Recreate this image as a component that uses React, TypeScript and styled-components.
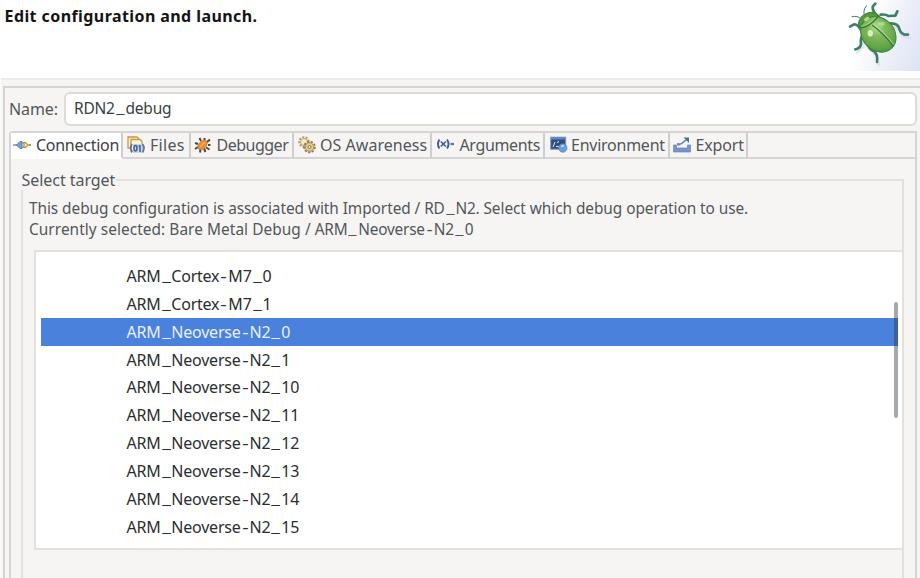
import React from 'react';
import styled, { createGlobalStyle, css } from 'styled-components';

const GlobalStyle = createGlobalStyle`
  * { box-sizing: border-box; }
  html, body { margin: 0; padding: 0; background: #fff; overflow: hidden; }
  body { font: 16px/20px "Noto Sans", "Open Sans", sans-serif; color: #51575a; }
`;

const line = '#d6d5d3';
const softLine = '#e3e1de';
const surface = '#f6f5f3';

const Dialog = styled.div`
  width: 920px;
  height: 578px;
  display: flex;
  flex-direction: column;
  overflow: hidden;
  background: #fff;
`;

const Header = styled.header`
  height: 78px;
  flex: none;
  display: flex;
  justify-content: space-between;
  padding-left: 4.5px;
`;

const Title = styled.h1`
  margin: 6px 0 0;
  font-size: 16px;
  line-height: 20px;
  font-weight: 700;
  letter-spacing: 0.42px;
  color: #141414;
`;

const Banner = styled.div`
  width: 82px;
  height: 71px;
  background: linear-gradient(112deg, #fff 36%, #eef0f9 64%, #dde3f5 100%);
  svg { display: block; }
`;

const Panel = styled.main`
  flex: 1;
  min-height: 0;
  display: flex;
  margin-left: 1px;
  padding: 6px 0 0 2px;
  background: ${surface};
  border-top: 2px solid #ebebea;
`;

const Frame = styled.div`
  flex: 1;
  min-width: 0;
  display: flex;
  flex-direction: column;
  border-top: 2px solid ${line};
  border-left: 2px solid ${line};
`;

const NameRow = styled.label`
  display: flex;
  align-items: center;
  height: 34px;
  flex: none;
  margin: 4px 3px 0 4px;
`;

const NameLabel = styled.span`
  width: 55px;
  height: 21px;
  letter-spacing: -0.1px;
`;

const NameField = styled.span`
  flex: 1;
  height: 34px;
  padding: 4px 8px;
  border: 2px solid #dedbd7;
  border-radius: 6px;
  background: #fff;
  color: #3a3f42;
  font-size: 15.5px;
  white-space: nowrap;
`;

const Folder = styled.section`
  flex: 1;
  min-height: 0;
  display: flex;
  flex-direction: column;
  margin: 5px 3px 0 4px;
  border: 2px solid ${line};
  border-bottom: 0;
  border-top-left-radius: 4px;
`;

const TabStrip = styled.nav`
  display: flex;
  height: 26px;
  flex: none;
`;

const Tab = styled.div<{ $width: number; $pad: number; $gap: number; $spacing: number; $active?: boolean }>`
  display: flex;
  align-items: center;
  flex: none;
  width: ${p => p.$width}px;
  padding-left: ${p => p.$pad}px;
  gap: ${p => p.$gap}px;
  letter-spacing: ${p => p.$spacing}px;
  white-space: nowrap;
  border-right: 2px solid #cfcecc;
  border-bottom: 2px solid ${line};
  ${p => p.$active && css`
    background: #fff;
    border-bottom-color: #fff;
    color: #3c4144;
  `}
  svg { flex: none; }
`;

const StripRest = styled.div`
  flex: 1;
  border-bottom: 2px solid ${line};
`;

const Group = styled.section`
  flex: 1;
  min-height: 0;
  display: flex;
  flex-direction: column;
  margin: 11px 11px 0 10px;
`;

const LegendRow = styled.div`
  display: flex;
  height: 20px;
  flex: none;
  align-items: flex-end;
`;

const Legend = styled.span`
  width: 95px;
  height: 20px;
  padding-left: 0.5px;
  letter-spacing: -0.05px;
  white-space: nowrap;
`;

const LegendRule = styled.div`
  flex: 1;
  height: 11px;
  border-top: 2px solid ${softLine};
  border-right: 2px solid ${softLine};
`;

const GroupBody = styled.div`
  flex: 1;
  min-height: 0;
  border-left: 2px solid ${softLine};
  border-right: 2px solid ${softLine};
  padding: 8px 0 0 6px;
`;

const Description = styled.p<{ $spacing: number }>`
  margin: 0;
  font-size: 15.4px;
  line-height: 21px;
  white-space: nowrap;
  letter-spacing: ${p => p.$spacing}px;
`;

const TargetList = styled.ul`
  list-style: none;
  position: relative;
  height: 300px;
  margin: 10px 0 0 5px;
  padding: 10px 4px 0 5px;
  background: #fff;
  border: 2px solid ${softLine};
  border-right: 0;
`;

const TargetRow = styled.li<{ $selected?: boolean }>`
  height: 27.85px;
  line-height: 29.6px;
  padding-left: 85.5px;
  white-space: nowrap;
  color: ${p => (p.$selected ? '#e9f0fb' : '#2b2e30')};
  background: ${p => (p.$selected ? '#4a81dc' : 'transparent')};
`;

const ScrollThumb = styled.div`
  position: absolute;
  top: 50px;
  right: 4px;
  width: 4px;
  height: 116px;
  border-radius: 2px;
  background: rgba(45, 52, 56, 0.42);
`;

const IdentText = styled.span`
  letter-spacing: -0.22px;
`;

const Separator = styled.span<{ $wide: boolean }>`
  display: inline-block;
  width: ${p => (p.$wide ? 10.8 : 9)}px;
  line-height: 1;
  text-align: center;
  letter-spacing: 0;
  transform: ${p => (p.$wide ? 'translateY(-1.5px) scaleX(1.2)' : 'scaleX(1.25)')};
`;

function Ident({ children }: { children: string }) {
  return (
    <IdentText>
      {children.split(/([_-])/).map((part, i) =>
        part === '_' || part === '-' ? <Separator key={i} $wide={part === '_'}>{part}</Separator> : part
      )}
    </IdentText>
  );
}

const Bug = () => (
  <svg width="82" height="71" viewBox="0 0 246 213" fill="none">
    <defs>
      <radialGradient id="shell" cx="0.32" cy="0.4" r="0.75">
        <stop offset="0" stopColor="#b5dd90" />
        <stop offset="0.35" stopColor="#80b95b" />
        <stop offset="0.8" stopColor="#5fa346" />
        <stop offset="1" stopColor="#438a3d" />
      </radialGradient>
    </defs>
    <g stroke="#d9dbe2" strokeWidth="8" strokeLinecap="round" opacity="0.7">
      <path d="M170 82q18 5 24 28l22 4M96 142q8 18 20 24l6 28M78 110l-2 30-18 18" />
    </g>
    <g stroke="#3c8066" strokeWidth="8" strokeLinecap="round" strokeLinejoin="round">
      <path d="M123 50Q103 38 104 20L112 11" />
      <path d="M128 44Q143 42 151 48L172 47L178 34" />
      <path d="M158 70Q180 70 184 86Q188 105 210 104" />
      <path d="M70 92Q60 72 48 73L36 80" />
      <path d="M76 100Q66 115 69 132Q67 145 52 148" />
      <path d="M87 128Q92 148 108 154Q120 162 117 186" />
      <path strokeWidth="3" d="M80 48Q73 34 85 17M68 56Q59 46 42 50" />
    </g>
    <ellipse cx="91" cy="62" rx="32" ry="22" transform="rotate(-34 91 62)" fill="#57993d" stroke="#387c38" strokeWidth="3" />
    <ellipse cx="121" cy="103" rx="58" ry="48" transform="rotate(46 121 103)" fill="url(#shell)" stroke="#38853a" strokeWidth="3" />
    <path d="M66 83Q93 83 119 51" stroke="#367a36" strokeWidth="4" />
    <path d="M69 79Q92 77 114 51" stroke="#a9d685" strokeWidth="3" />
    <path d="M102 75Q133 96 166 138" stroke="#35793b" strokeWidth="4" />
    <path d="M106 74Q137 94 168 134" stroke="#b8dda0" strokeWidth="3" />
    <ellipse cx="97" cy="100" rx="8" ry="10" fill="#effadf" opacity="0.8" />
    <ellipse cx="86" cy="57" rx="9" ry="5" fill="#d5efb8" opacity="0.7" transform="rotate(-30 86 57)" />
    <ellipse cx="130" cy="71" rx="11" ry="6" fill="#d0edb2" opacity="0.5" />
  </svg>
);

const Icon = ({ children }: { children: React.ReactNode }) => (
  <svg width="18" height="18" viewBox="0 0 18 18" fill="none">{children}</svg>
);

const ConnectionIcon = () => (
  <Icon>
    <path d="M0 9h4M16 9h2" stroke="#7590bd" strokeWidth="1.6" />
    <path d="M3.500 9l3.500-3.500h2v7H7z" fill="#7d9fdb" stroke="#5679b5" />
    <path d="M9 7h2M9 11h2" stroke="#967a38" strokeWidth="1.2" />
    <path d="M11 6.500h1.500L15 9l-2.500 2.500H11z" fill="#fff1bd" stroke="#b38b32" strokeWidth="1.2" />
    <path d="M15.500 9H18" stroke="#b38b32" strokeWidth="1.4" />
  </Icon>
);

const FilesIcon = () => (
  <Icon>
    <path d="M1 1h9l2 2v9H1z" fill="#fbefcb" stroke="#c59b45" strokeWidth="1.3" />
    <path d="M4 3.500h9l2 2V15H4z" fill="#fdf4d9" stroke="#c59b45" strokeWidth="1.3" />
    <rect x="6" y="8" width="9" height="9" fill="#c9d6ea" />
    <path d="M5 8Q2.500 12 5 16.500M15.500 8Q18.500 12 15.500 16.500" stroke="#57779f" strokeWidth="1.7" />
    <ellipse cx="8.500" cy="12.300" rx="1.500" ry="2.700" stroke="#38608d" strokeWidth="1.500" />
    <path d="M11.500 10H13v6" stroke="#38608d" strokeWidth="1.500" />
  </Icon>
);

const DebuggerIcon = () => (
  <Icon>
    <path d="M7 5L5.500 2M10.500 4V2M13 6l3-2.500M14 9h2.500M12 11.500l3.500 2M10 12.500l1.500 3.500M6.500 13L6 16.500M4 11l-3 2M4 8L1 7" stroke="#4b4745" strokeWidth="2" />
    <ellipse cx="8.500" cy="9" rx="5.500" ry="3.700" transform="rotate(-45 8.500 9)" fill="#f08b2b" stroke="#c06c24" strokeWidth=".7" />
    <path d="M6.500 10.500l4-4" stroke="#ffc078" strokeWidth="1.500" />
  </Icon>
);

const AwarenessIcon = () => (
  <Icon>
    <circle cx="6" cy="6" r="4.700" stroke="#b29567" strokeWidth="2" strokeDasharray="2 1.300" />
    <circle cx="6" cy="6" r="3.500" fill="#f4e9cb" stroke="#c4aa79" />
    <circle cx="11.500" cy="11" r="5.400" stroke="#957c55" strokeWidth="1.800" strokeDasharray="2.300 1.400" />
    <circle cx="11.500" cy="11" r="4.300" fill="#e4cd8c" stroke="#a98a52" />
    <circle cx="11.500" cy="11" r="1.500" fill="#fff9e8" stroke="#87704b" />
  </Icon>
);

const ArgumentsIcon = () => (
  <Icon>
    <path d="M2.500 3.500Q-.5 8 2.500 12.500M10 3.500Q13 8 10 12.500" stroke="#3f5f91" strokeWidth="1.900" />
    <path d="M3.800 5.500l5 5M8.800 5.500l-5 5" stroke="#3f5f91" strokeWidth="1.700" />
    <path d="M13.500 8H17" stroke="#5878a7" strokeWidth="2.300" />
  </Icon>
);

const EnvironmentIcon = () => (
  <Icon>
    <rect x=".7" y="1.200" width="15" height="12" fill="#304f7e" stroke="#8299ba" />
    <path d="M1 2.500h14.500" stroke="#568bcc" strokeWidth="2" />
    <path d="M3 11l2-5M6 10.500h3M7 6.500l2-1" stroke="#dce9f7" />
    <circle cx="12.800" cy="12" r="4.200" fill="#699edb" stroke="#5682b7" strokeWidth=".7" />
    <path d="M11 10.500l3-1" stroke="#c8e0f7" strokeWidth="1.500" />
  </Icon>
);

const ExportIcon = () => (
  <Icon>
    <path d="M.5 9h3v3h11V9h3v7H.500z" fill="#7894cb" stroke="#6782b8" strokeWidth=".7" />
    <path d="M5 9Q9 8 13 4" stroke="#5081ac" strokeWidth="1.500" />
    <path d="M10.500 1.500H16V7z" fill="#3b759f" />
    <rect x="4" y="7" width="2.500" height="2.500" fill="#6b94b9" />
  </Icon>
);

const tabs = [
  { label: 'Connection', icon: <ConnectionIcon />, width: 112, pad: 2, gap: 5, spacing: -0.27, active: true },
  { label: 'Files', icon: <FilesIcon />, width: 68, pad: 4, gap: 5, spacing: 0.3 },
  { label: 'Debugger', icon: <DebuggerIcon />, width: 103, pad: 3, gap: 4.5, spacing: -0.5 },
  { label: 'OS Awareness', icon: <AwarenessIcon />, width: 138, pad: 4, gap: 4, spacing: 0.03 },
  { label: 'Arguments', icon: <ArgumentsIcon />, width: 113, pad: 5, gap: 4.5, spacing: -0.35 },
  { label: 'Environment', icon: <EnvironmentIcon />, width: 125, pad: 5, gap: 3, spacing: -0.25 },
  { label: 'Export', icon: <ExportIcon />, width: 78, pad: 3, gap: 4.5, spacing: -0.15 },
];

const targets = [
  'ARM_Cortex-M7_0', 'ARM_Cortex-M7_1', 'ARM_Neoverse-N2_0', 'ARM_Neoverse-N2_1', 'ARM_Neoverse-N2_10',
  'ARM_Neoverse-N2_11', 'ARM_Neoverse-N2_12', 'ARM_Neoverse-N2_13', 'ARM_Neoverse-N2_14', 'ARM_Neoverse-N2_15',
];

export default function App() {
  return (
    <Dialog>
      <GlobalStyle />
      <Header>
        <Title>Edit configuration and launch.</Title>
        <Banner><Bug /></Banner>
      </Header>
      <Panel>
        <Frame>
          <NameRow>
            <NameLabel>Name:</NameLabel>
            <NameField><Ident>RDN2_debug</Ident></NameField>
          </NameRow>
          <Folder>
            <TabStrip>
              {tabs.map(t => (
                <Tab key={t.label} $width={t.width} $pad={t.pad} $gap={t.gap} $spacing={t.spacing} $active={t.active}>
                  {t.icon}{t.label}
                </Tab>
              ))}
              <StripRest />
            </TabStrip>
            <Group>
              <LegendRow>
                <Legend>Select target</Legend>
                <LegendRule />
              </LegendRow>
              <GroupBody>
                <Description $spacing={-0.06}>
                  This debug configuration is associated with Imported / <Ident>RD_N2</Ident>. Select which debug operation to use.
                </Description>
                <Description $spacing={0.06}>
                  Currently selected: Bare Metal Debug / <Ident>ARM_Neoverse-N2_0</Ident>
                </Description>
                <TargetList>
                  {targets.map(t => (
                    <TargetRow key={t} $selected={t === 'ARM_Neoverse-N2_0'}><Ident>{t}</Ident></TargetRow>
                  ))}
                  <ScrollThumb />
                </TargetList>
              </GroupBody>
            </Group>
          </Folder>
        </Frame>
      </Panel>
    </Dialog>
  );
}
